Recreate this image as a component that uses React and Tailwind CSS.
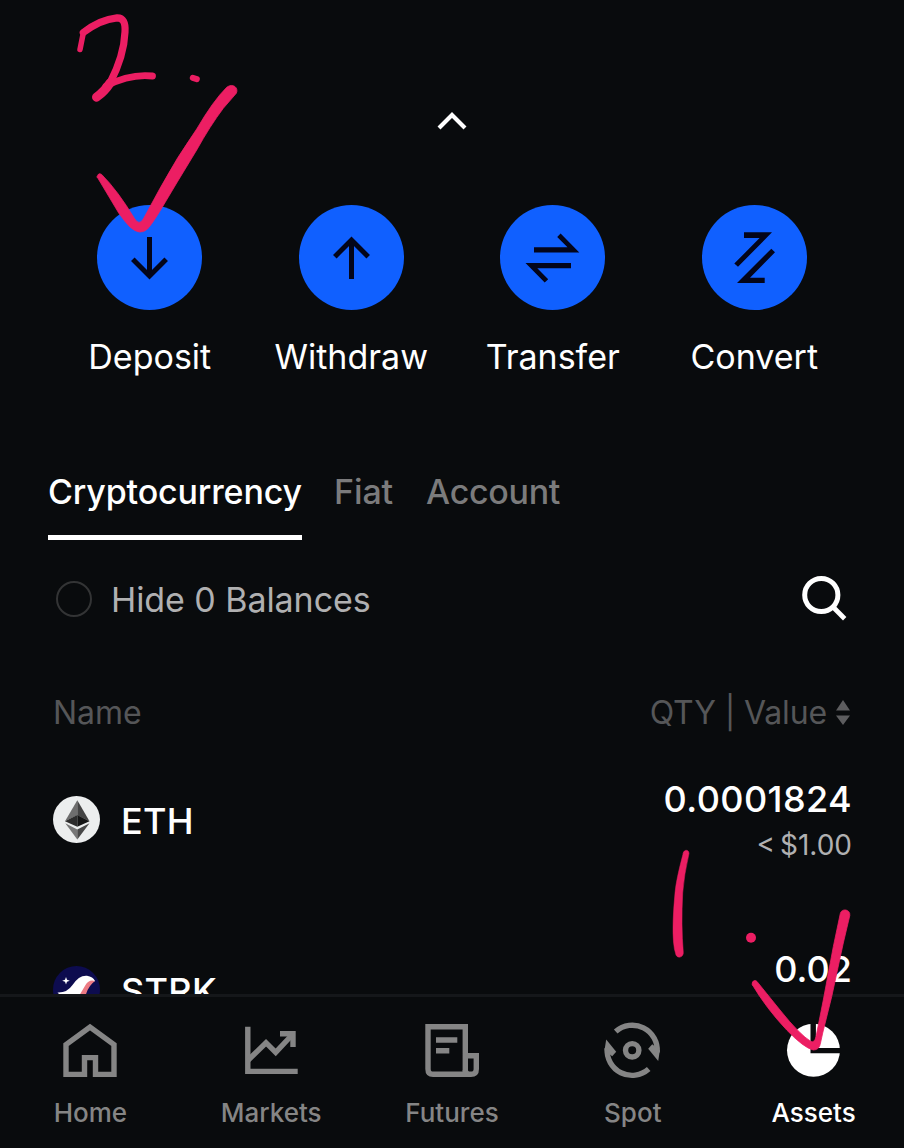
import React from "react";

const ActionIcon = ({ children }) => (
  <svg viewBox="0 0 105 105" className="w-[105px] h-[105px] rounded-full bg-[#1060ff]" fill="#03051a" stroke="none">
    {children}
  </svg>
);

const actions = [
  {
    label: "Deposit",
    icon: <path d="M52.5 32V72M35.8 54.3L52.5 71L69.2 54.3" fill="none" stroke="#03051a" strokeWidth="5" />,
  },
  {
    label: "Withdraw",
    icon: <path d="M52.5 74V34M35.8 51.7L52.5 35L69.2 51.7" fill="none" stroke="#03051a" strokeWidth="5" />,
  },
  {
    label: "Transfer",
    icon: (
      <>
        <path d="M34 42.3V47.5H79.3L60.6 28.6L57.2 32L67.5 42.3Z" />
        <path d="M71 58V63.3H37.3L48.2 74.3L44.7 77.5L25.5 58Z" />
      </>
    ),
  },
  {
    label: "Convert",
    icon: (
      <>
        <path d="M42 27.3H70L36 61.8L32.3 58.6L57.6 33H42Z" />
        <path d="M69.3 43.7L73 47.3L48 72.7H62.7V78H35Z" />
      </>
    ),
  },
];

const navItems = [
  {
    label: "Home",
    icon: <path d="M6 24.7L30 7L54 24.7V54.4H35.5V37.6H24.5V54.4H6Z" />,
  },
  {
    label: "Markets",
    icon: (
      <>
        <path d="M6.8 6.7V51.4H56.7" />
        <path d="M7.3 40L25 22.7L34.7 32.3L51 15" />
        <path d="M39 13.7H52V27" />
      </>
    ),
  },
  {
    label: "Futures",
    icon: (
      <>
        <path d="M43.3 54.3V6.7H6V49Q6 54.3 11 54.3H49Q54.3 54.3 54.3 49V35.7H43.3" />
        <path d="M43.3 50Q43.3 54.3 47 54.3" />
        <path d="M14 20H35.3M14 30.7H27.3" />
      </>
    ),
  },
  {
    label: "Spot",
    icon: (
      <g transform="translate(29.2 30.3)">
        <circle r="6.7" />
        <path d="M-16.5 -18.8A25 25 0 0 1 25 2" />
        <path d="M20 -6L16 -1.5L26 10.7L27.7 0Z" fill="currentColor" stroke="none" />
        <g transform="rotate(180)">
          <path d="M-16.5 -18.8A25 25 0 0 1 25 2" />
          <path d="M20 -6L16 -1.5L26 10.7L27.7 0Z" fill="currentColor" stroke="none" />
        </g>
      </g>
    ),
  },
  {
    label: "Assets",
    active: true,
    icon: (
      <>
        <circle cx="29.5" cy="30.3" r="26.5" fill="currentColor" stroke="none" />
        <path d="M29.2 3V30.6M26.5 30.6H58" stroke="#090b0d" strokeWidth="5.4" />
      </>
    ),
  },
];

const EthIcon = () => (
  <svg viewBox="0 0 47 47" className="w-[47px] h-[47px] -mt-[3px]">
    <circle cx="23.5" cy="23.5" r="23.5" fill="#eceeee" />
    <path d="M24.3 4.3L12 25.3L24.3 19.3Z" fill="#6e6e6e" />
    <path d="M24.3 4.3L36.5 25.3L24.3 19.3Z" fill="#444" />
    <path d="M12 25.3L24.3 19V30.8Z" fill="#2c2c2c" />
    <path d="M36.5 25.3L24.3 19V30.8Z" fill="#151515" />
    <path d="M12.3 27.2L24.3 33.6V43.5Z" fill="#777" />
    <path d="M36.5 27.2L24.3 33.6V43.5Z" fill="#484848" />
  </svg>
);

const StrkIcon = () => (
  <svg viewBox="0 0 47 47" className="w-[47px] h-[47px] -mt-[3px]">
    <circle cx="23.5" cy="23.5" r="23.5" fill="#0d0c4f" />
    <path d="M13 11L14 13.7L16.8 14.7L14 15.7L13 18.5L12 15.7L9.2 14.7L12 13.7Z" fill="#fff" />
    <path d="M4.5 26.5Q14 27 19.5 19Q26 9 34 9.7Q40 10.500 42 15L34 19L28 30H8Z" fill="#fff" />
    <path d="M42 15Q36 13 32.500 19L26 30H32.500Q35 20 42 15Z" fill="#ec7a83" />
  </svg>
);

// hand drawn marks that sit on top of the screen
const Marks = () => (
  <svg
    viewBox="0 0 904 1148"
    className="absolute inset-0 w-[904px] h-[1148px] pointer-events-none"
    fill="#ec1e63"
    stroke="#ec1e63"
    strokeWidth="0"
    strokeLinecap="round"
    strokeLinejoin="round"
  >
    <path d="M80 49.5L83.3 33" fill="none" strokeWidth="5.5" />
    <path d="M83.3 32.5Q100 19.5 117 17.8Q126 17.5 125 32Q124 56 110 83" fill="none" strokeWidth="7.2" />
    <path d="M110 83Q105 91 96.5 97.2" fill="none" strokeWidth="9" />
    <path d="M106 86Q130 73.5 152.5 76" fill="none" strokeWidth="6.8" />
    <path d="M192.8 77.8L196.8 79.2" fill="none" strokeWidth="6" />
    <path d="M97.2 177L118.7 213Q125 222 130 227Q140 236 147.5 229Q152 224 160 211L176.7 183L196.7 150Q210 126 223.3 108.3L236.3 93.3C239 88 233 82.5 226.7 87.3Q213 101 196.7 129Q177 157 160 188.3L143.3 219Q139 226 134.5 218.5Q118 191 101.7 174.5Q98 172 97.2 177Z" strokeWidth="0.8" />
    <path d="M683.3 853Q676 880 675 893Q672 925 673.5 942Q674 949 676 955C678 959 683.5 957 683.3 952.5Q681 925 682.7 893Q684 875 689 853.5C689 849.5 684 849 683.3 853Z" strokeWidth="0.5" />
    <circle cx="751" cy="937.7" r="5" />
    <path d="M752.5 985Q766 1008 786.7 1030Q804 1048 813.3 1050Q819.5 1050 820.5 1043L822.7 1033L831.7 996.7L843.3 943L849.8 915.5C850.5 909 841.5 908 840.3 913.5L833.3 946.7L823.3 1000L816 1036.7Q814.5 1043 811 1041.5Q800 1035 780 1010L757 981.5C754.5 979 751 982 752.5 985Z" strokeWidth="0.8" />
  </svg>
);

const App = () => {
  return (
    <div className="relative flex flex-col w-[904px] h-[1148px] overflow-hidden bg-[#090b0d] text-white font-['Inter',sans-serif]">
      <main className="flex flex-col h-[994px] overflow-hidden">
        <div className="flex justify-center pt-[109px]">
          <svg viewBox="0 0 32 24" className="w-8 h-6" fill="none" stroke="#fff" strokeWidth="4.2">
            <path d="M3 19L16 6L29 19" />
          </svg>
        </div>

        <section className="grid grid-cols-4 px-[49px] mt-[72px]">
          {actions.map((item) => (
            <button key={item.label} className="flex flex-col items-center">
              <ActionIcon>{item.icon}</ActionIcon>
              <span className="mt-[25px] text-[34px] leading-[44px] whitespace-nowrap">{item.label}</span>
            </button>
          ))}
        </section>

        <div className="flex gap-[33px] pl-12 mt-[91px] text-[34px] leading-[44px] font-medium text-[#7b7b7c]">
          <button className="h-[70px] w-[254px] pb-[21px] border-b-5 border-white text-white whitespace-nowrap tracking-[-0.15px]">Cryptocurrency</button>
          <button className="h-[70px] pb-[26px] -ml-px tracking-[-0.1px]">Fiat</button>
          <button className="h-[70px] pb-[26px] tracking-[-0.3px]">Account</button>
        </div>

        <div className="flex items-center justify-between h-[48px] pl-14 pr-[54px] mt-[35px]">
          <label className="flex items-center gap-[19px]">
            <span className="w-9 h-9 rounded-full border-2 border-[#333435]" />
            <span className="text-[34px] leading-[44px] text-[#b0b0b1] pt-[2px] tracking-[-0.07px]">Hide 0 Balances</span>
          </label>
          <svg viewBox="0 0 48 48" className="w-12 h-12" fill="none" stroke="#fff">
            <circle cx="19.3" cy="20" r="16.6" strokeWidth="5" />
            <path d="M31.3 32.3L42.7 43.7" strokeWidth="4.8" />
          </svg>
        </div>

        <div className="flex items-center justify-between h-11 pl-[53px] pr-[53px] mt-[68px] text-[32px] leading-[44px] text-[#555658]">
          <span>Name</span>
          <span className="flex items-center gap-2 tracking-[-0.15px]">
            QTY | Value
            <svg viewBox="0 0 16 28" className="w-4 h-7" fill="#5d5d5f">
              <path d="M8 1L15 11.5H1ZM1 16.5H15L8 26Z" />
            </svg>
          </span>
        </div>

        <div className="flex justify-between h-[170px] pl-[53px] pr-[52px] pt-[42px] shrink-0">
          <div className="flex items-center gap-[21px] h-[88px]">
            <EthIcon />
            <span className="text-[36px] leading-[44px] font-medium tracking-[0.3px]">ETH</span>
          </div>
          <div className="flex flex-col items-end">
            <span className="text-[36px] leading-[44px] font-medium tracking-[0.4px]">0.0001824</span>
            <span className="text-[28px] leading-[48px] text-[#b0b0b1] [word-spacing:-3px]">&lt; $1.00</span>
          </div>
        </div>

        <div className="flex justify-between h-[170px] pl-[53px] pr-[52px] pt-[42px] shrink-0">
          <div className="flex items-center gap-[21px] h-[88px]">
            <StrkIcon />
            <span className="text-[36px] leading-[44px] font-medium tracking-[0.3px]">STRK</span>
          </div>
          <span className="text-[36px] leading-[44px] font-medium">0.02</span>
        </div>
      </main>

      <nav className="grid grid-cols-5 h-[154px] border-t-3 border-[#15171a] pt-[23px]">
        {navItems.map((item) => (
          <button key={item.label} className={`flex flex-col items-center ${item.active ? "text-white" : "text-[#858585]"}`}>
            <svg viewBox="0 0 60 60" className="w-[60px] h-[60px]" fill="none" stroke="currentColor" strokeWidth="5.4">
              {item.icon}
            </svg>
            <span className="mt-4 text-[26px] leading-[34px] font-medium">{item.label}</span>
          </button>
        ))}
      </nav>

      <Marks />
    </div>
  );
};

export default App;
